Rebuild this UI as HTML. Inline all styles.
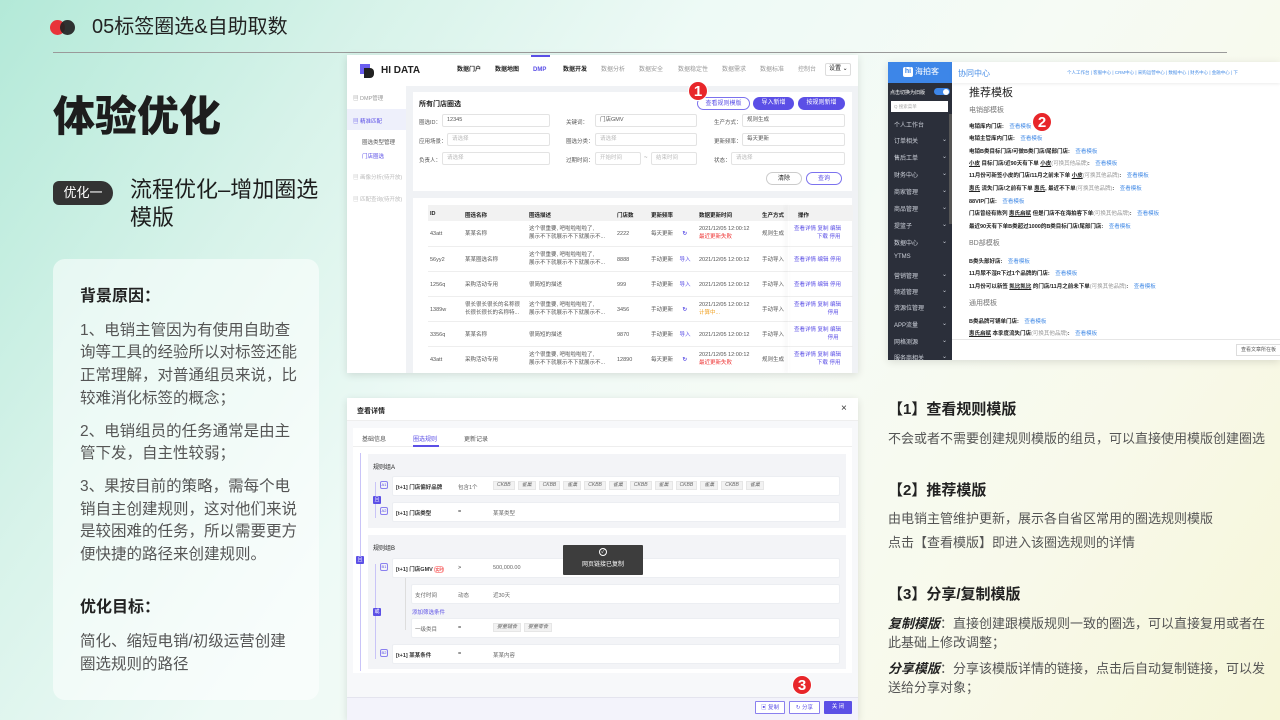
<!DOCTYPE html>
<html><head><meta charset="utf-8">
<style>
*{margin:0;padding:0;box-sizing:border-box}
body{width:1280px;height:720px;overflow:hidden;position:relative;font-family:"Liberation Sans","Noto Sans CJK SC",sans-serif;color:#222;
background:linear-gradient(125deg,#b3e9d8 0%,#d8f3ea 22%,#eefaf6 40%,#f6fbf5 60%,#f8f9ea 80%,#f6f6d8 100%)}
.a{position:absolute;white-space:nowrap}
.p{color:#5b4fe6}
.t6{font-size:6px}
.g{color:#999}
.ss{position:absolute;background:#fff;box-shadow:0 2px 8px rgba(0,0,0,.12);overflow:hidden}
.red{position:absolute;width:20px;height:20px;border-radius:50%;background:#e8262a;color:#fff;font-weight:bold;font-size:15px;text-align:center;line-height:20px;border:1px solid #fff}
.inp{position:absolute;height:13px;border:1px solid #e3e3e3;border-radius:2px;font-size:5.5px;line-height:11px;padding-left:4px;color:#bbb;background:#fff}
.btn{position:absolute;height:13px;border-radius:7px;font-size:6px;line-height:12px;text-align:center}
.row{position:absolute;left:81px;width:425px;border-bottom:1px solid #eee;font-size:5.5px;color:#555}
.row span{position:absolute;white-space:nowrap;line-height:8px}
.lm{position:absolute;left:6px;font-size:6px;color:#cfd3dc;white-space:nowrap}
.lm i{position:absolute;left:48px;font-style:normal}
.rt{position:absolute;left:81px;font-size:5.5px;font-weight:bold;color:#222;white-space:nowrap}
.rt b{color:#4a8fe7;font-weight:normal;margin-left:4px}
.rt em{font-style:normal;color:#999;font-weight:normal}
.rr{position:absolute;background:#fff;border:1px solid #eceef2;border-radius:2px;font-size:5.5px;color:#333}
.rr span{position:absolute;top:6px;white-space:nowrap}
.tag{display:inline-block;background:#f2f2f2;border:1px solid #e6e6e6;padding:0 3px;margin-right:3px;font-size:5px;color:#666;line-height:7px}
.ic{position:absolute;width:8px;height:8px;border:1px solid #8a80ef;border-radius:2px;font-size:4px;color:#5b4fe6;text-align:center;line-height:6px}
.lg{position:absolute;width:8px;height:8px;background:#5b4fe6;border-radius:1px;color:#fff;font-size:5px;text-align:center;line-height:8px}
</style></head><body>

<!-- header -->
<div class="a" style="left:50px;top:20px;width:15px;height:15px;border-radius:50%;background:#e8343a"></div>
<div class="a" style="left:60px;top:20px;width:15px;height:15px;border-radius:50%;background:#222;opacity:.92"></div>
<div class="a" style="left:92px;top:13px;font-size:20px;line-height:28px;color:#222">05标签圈选&amp;自助取数</div>
<div class="a" style="left:53px;top:52px;width:1174px;height:1px;background:#9a9a9a"></div>

<div class="a" style="left:53px;top:91px;font-size:42px;font-weight:900;line-height:52px;color:#1d1d1d">体验优化</div>
<div class="a" style="left:53px;top:181px;width:60px;height:24px;border-radius:6px 12px 12px 6px;background:#333;color:#fff;font-size:13px;line-height:24px;text-align:center">优化一</div>
<div class="a" style="left:130px;top:176px;font-size:22px;line-height:28px;color:#1d1d1d;white-space:normal;width:190px">流程优化–增加圈选模版</div>

<div class="a" style="left:53px;top:259px;width:266px;height:441px;border-radius:12px;background:rgba(255,255,255,.55);white-space:normal"></div>
<div class="a" style="left:80px;top:286px;width:221px;white-space:normal;font-size:15.5px;line-height:22.7px;color:#555">
<div style="color:#222;font-weight:bold;font-size:16px;margin-bottom:11px">背景原因：</div>
<div style="margin-bottom:10px">1、电销主管因为有使用自助查询等工具的经验所以对标签还能正常理解，对普通组员来说，比较难消化标签的概念；</div>
<div style="margin-bottom:10px">2、电销组员的任务通常是由主管下发，自主性较弱；</div>
<div style="margin-bottom:30px">3、果按目前的策略，需每个电销自主创建规则，这对他们来说是较困难的任务，所以需要更方便快捷的路径来创建规则。</div>
<div style="color:#222;font-weight:bold;font-size:16px;margin-bottom:12px">优化目标：</div>
<div>简化、缩短电销/初级运营创建圈选规则的路径</div>
</div>

<!-- screenshot 1 -->
<div class="ss" style="left:347px;top:55px;width:511px;height:318px;background:#f0f2f5">
 <div class="a" style="left:0;top:0;width:511px;height:31px;background:#fff"></div>
 <div class="a" style="left:184px;top:0;width:19px;height:2px;background:#5b4fe6"></div>
 <div class="a" style="left:13px;top:9px;width:10px;height:10px;background:#6b5ff0"></div>
 <div class="a" style="left:17px;top:13px;width:10px;height:10px;background:#222;border-radius:0 4px 4px 0"></div>
 <div class="a" style="left:34px;top:10px;font-size:10px;font-weight:900;line-height:11px">HI DATA</div>
 <div class="a" style="top:12px;left:110px;font-size:6px;font-weight:bold;line-height:7px">数据门户</div>
 <div class="a" style="top:12px;left:148px;font-size:6px;font-weight:bold;line-height:7px">数据地图</div>
 <div class="a p" style="top:12px;left:186px;font-size:6px;font-weight:bold;line-height:7px">DMP</div>
 <div class="a" style="top:12px;left:216px;font-size:6px;font-weight:bold;line-height:7px">数据开发</div>
 <div class="a g" style="top:12px;left:254px;font-size:6px;line-height:7px">数据分析</div>
 <div class="a g" style="top:12px;left:292px;font-size:6px;line-height:7px">数据安全</div>
 <div class="a g" style="top:12px;left:331px;font-size:6px;line-height:7px">数据稳定性</div>
 <div class="a g" style="top:12px;left:375px;font-size:6px;line-height:7px">数据需求</div>
 <div class="a g" style="top:12px;left:413px;font-size:6px;line-height:7px">数据标准</div>
 <div class="a g" style="top:12px;left:451px;font-size:6px;line-height:7px">控制台</div>
 <div class="a" style="top:8px;left:478px;width:26px;height:13px;border:1px solid #ddd;border-radius:2px;font-size:6px;line-height:11px;padding-left:3px">设置 ⌄</div>
 <div class="a" style="left:0;top:31px;width:59px;height:287px;background:#fff"></div>
 <div class="a g" style="left:6px;top:39px;font-size:5.5px">▤ DMP管理</div>
 <div class="a" style="left:0;top:54px;width:59px;height:21px;background:#eef0fb"></div>
 <div class="a p" style="left:6px;top:62px;font-size:5.5px">▤ 精准匹配</div>
 <div class="a" style="left:15px;top:83px;font-size:5.5px;color:#555">圈选类型管理</div>
 <div class="a p" style="left:15px;top:97px;font-size:5.5px">门店圈选</div>
 <div class="a" style="left:6px;top:118px;font-size:5.5px;color:#bbb">▤ 画像分析(待开放)</div>
 <div class="a" style="left:6px;top:140px;font-size:5.5px;color:#bbb">▤ 匹配查询(待开放)</div>
 <div class="a" style="left:66px;top:37px;width:439px;height:99px;background:#fff"></div>
 <div class="a" style="left:72px;top:44px;font-size:7px;font-weight:bold">所有门店圈选</div>
 <div class="btn p" style="left:350px;top:42px;width:53px;border:1px solid #7c72ee;background:#fff">查看规则模版</div>
 <div class="btn" style="left:406px;top:42px;width:41px;background:#5b4fe6;color:#fff">导入新增</div>
 <div class="btn" style="left:451px;top:42px;width:47px;background:#5b4fe6;color:#fff">按规则新增</div>
 <div class="a" style="left:72px;top:63px;font-size:5.5px;color:#555">圈选ID：</div><div class="inp" style="left:95px;top:59px;width:108px;color:#555">12345</div>
 <div class="a" style="left:219px;top:63px;font-size:5.5px;color:#555">关键词：</div><div class="inp" style="left:248px;top:59px;width:102px;color:#555">门店GMV</div>
 <div class="a" style="left:367px;top:63px;font-size:5.5px;color:#555">生产方式：</div><div class="inp" style="left:395px;top:59px;width:103px;color:#555">规则生成</div>
 <div class="a" style="left:72px;top:82px;font-size:5.5px;color:#555">应用场景：</div><div class="inp" style="left:100px;top:78px;width:103px">请选择</div>
 <div class="a" style="left:219px;top:82px;font-size:5.5px;color:#555">圈选分类：</div><div class="inp" style="left:248px;top:78px;width:102px">请选择</div>
 <div class="a" style="left:367px;top:82px;font-size:5.5px;color:#555">更新频率：</div><div class="inp" style="left:395px;top:78px;width:103px;color:#555">每天更新</div>
 <div class="a" style="left:72px;top:101px;font-size:5.5px;color:#555">负责人：</div><div class="inp" style="left:95px;top:97px;width:108px">请选择</div>
 <div class="a" style="left:219px;top:101px;font-size:5.5px;color:#555">过期时间：</div><div class="inp" style="left:248px;top:97px;width:46px">开始时间</div><div class="a g" style="left:297px;top:100px;font-size:6px">~</div><div class="inp" style="left:304px;top:97px;width:46px">结束时间</div>
 <div class="a" style="left:367px;top:101px;font-size:5.5px;color:#555">状态：</div><div class="inp" style="left:384px;top:97px;width:114px">请选择</div>
 <div class="btn" style="left:419px;top:117px;width:36px;border:1px solid #ccc;background:#fff">清除</div>
 <div class="btn p" style="left:459px;top:117px;width:36px;border:1px solid #7c72ee;background:#fff">查询</div>
 <div class="a" style="left:66px;top:143px;width:439px;height:175px;background:#fff"></div>
 <div class="a" style="left:81px;top:150px;width:425px;height:16px;background:#f2f2f2;font-size:5.5px;font-weight:bold"></div>
 <div class="a" style="top:156px;left:83px;font-size:5.5px;font-weight:bold">ID</div>
 <div class="a" style="top:156px;left:118px;font-size:5.5px;font-weight:bold">圈选名称</div>
 <div class="a" style="top:156px;left:182px;font-size:5.5px;font-weight:bold">圈选描述</div>
 <div class="a" style="top:156px;left:270px;font-size:5.5px;font-weight:bold">门店数</div>
 <div class="a" style="top:156px;left:304px;font-size:5.5px;font-weight:bold">更新频率</div>
 <div class="a" style="top:156px;left:352px;font-size:5.5px;font-weight:bold">数据更新时间</div>
 <div class="a" style="top:156px;left:415px;font-size:5.5px;font-weight:bold">生产方式</div>
 <div class="a" style="top:156px;left:451px;font-size:5.5px;font-weight:bold">操作</div>
 <div class="row" style="top:166px;height:26px"><span style="left:2px;top:9px">43att</span><span style="left:37px;top:9px">某某名称</span><span style="left:101px;top:4px">这个很重要, 吧啦啦啦啦了,<br>展示不下就展示不下就展示不...</span><span style="left:189px;top:9px">2222</span><span style="left:223px;top:9px">每天更新 <b class="p" style="margin-left:8px">↻</b></span><span style="left:271px;top:4px">2021/12/05 12:00:12<br><b style="color:#e33;font-weight:normal">最近更新失败</b></span><span style="left:334px;top:9px">规则生成</span><span class="p" style="left:366px;top:4px">查看详情 复制 编辑<br>&nbsp;&nbsp;&nbsp;&nbsp;&nbsp;&nbsp;&nbsp;&nbsp;&nbsp;&nbsp;&nbsp;&nbsp;&nbsp;&nbsp;&nbsp;下载 停用</span></div>
 <div class="row" style="top:192px;height:25px"><span style="left:2px;top:9px">56yy2</span><span style="left:37px;top:9px">某某圈选名称</span><span style="left:101px;top:4px">这个很重要, 吧啦啦啦啦了,<br>展示不下就展示不下就展示不...</span><span style="left:189px;top:9px">8888</span><span style="left:223px;top:9px">手动更新 <b class="p" style="margin-left:5px;font-weight:normal">导入</b></span><span style="left:271px;top:9px">2021/12/05 12:00:12</span><span style="left:334px;top:9px">手动导入</span><span class="p" style="left:366px;top:9px">查看详情 编辑 停用</span></div>
 <div class="row" style="top:217px;height:25px"><span style="left:2px;top:9px">1256q</span><span style="left:37px;top:9px">采购活动专用</span><span style="left:101px;top:9px">很简短的描述</span><span style="left:189px;top:9px">999</span><span style="left:223px;top:9px">手动更新 <b class="p" style="margin-left:5px;font-weight:normal">导入</b></span><span style="left:271px;top:9px">2021/12/05 12:00:12</span><span style="left:334px;top:9px">手动导入</span><span class="p" style="left:366px;top:9px">查看详情 编辑 停用</span></div>
 <div class="row" style="top:242px;height:25px"><span style="left:2px;top:9px">1389w</span><span style="left:37px;top:4px">很长很长很长的名称很<br>长很长很长的名称特...</span><span style="left:101px;top:4px">这个很重要, 吧啦啦啦啦了,<br>展示不下就展示不下就展示不...</span><span style="left:189px;top:9px">3456</span><span style="left:223px;top:9px">手动更新 <b class="p" style="margin-left:8px">↻</b></span><span style="left:271px;top:4px">2021/12/05 12:00:12<br><b style="color:#f0a020;font-weight:normal">计算中...</b></span><span style="left:334px;top:9px">手动导入</span><span class="p" style="left:366px;top:4px">查看详情 复制 编辑<br>&nbsp;&nbsp;&nbsp;&nbsp;&nbsp;&nbsp;&nbsp;&nbsp;&nbsp;&nbsp;&nbsp;&nbsp;&nbsp;&nbsp;&nbsp;&nbsp;&nbsp;&nbsp;&nbsp;&nbsp;&nbsp;&nbsp;停用</span></div>
 <div class="row" style="top:267px;height:25px"><span style="left:2px;top:9px">3356q</span><span style="left:37px;top:9px">某某名称</span><span style="left:101px;top:9px">很简短的描述</span><span style="left:189px;top:9px">9870</span><span style="left:223px;top:9px">手动更新 <b class="p" style="margin-left:5px;font-weight:normal">导入</b></span><span style="left:271px;top:9px">2021/12/05 12:00:12</span><span style="left:334px;top:9px">手动导入</span><span class="p" style="left:366px;top:4px">查看详情 复制 编辑<br>&nbsp;&nbsp;&nbsp;&nbsp;&nbsp;&nbsp;&nbsp;&nbsp;&nbsp;&nbsp;&nbsp;&nbsp;&nbsp;&nbsp;&nbsp;&nbsp;&nbsp;&nbsp;&nbsp;&nbsp;&nbsp;&nbsp;停用</span></div>
 <div class="row" style="top:292px;height:26px;border:none"><span style="left:2px;top:9px">43att</span><span style="left:37px;top:9px">采购活动专用</span><span style="left:101px;top:4px">这个很重要, 吧啦啦啦啦了,<br>展示不下就展示不下就展示不...</span><span style="left:189px;top:9px">12890</span><span style="left:223px;top:9px">每天更新 <b class="p" style="margin-left:8px">↻</b></span><span style="left:271px;top:4px">2021/12/05 12:00:12<br><b style="color:#e33;font-weight:normal">最近更新失败</b></span><span style="left:334px;top:9px">规则生成</span><span class="p" style="left:366px;top:4px">查看详情 复制 编辑<br>&nbsp;&nbsp;&nbsp;&nbsp;&nbsp;&nbsp;&nbsp;&nbsp;&nbsp;&nbsp;&nbsp;&nbsp;&nbsp;&nbsp;&nbsp;下载 停用</span></div>
 <div class="a" style="left:441px;top:150px;width:1px;height:168px;box-shadow:-2px 0 4px rgba(0,0,0,.12)"></div>
</div>
<div class="red" style="left:688px;top:81px">1</div>

<!-- screenshot 2 -->
<div class="ss" style="left:888px;top:62px;width:392px;height:298px">
 <div class="a" style="left:0;top:0;width:64px;height:21px;background:#3d86e8"></div>
 <div class="a" style="left:15px;top:5px;width:10px;height:10px;background:#fff;border-radius:2px;color:#3d86e8;font-size:7px;font-weight:bold;text-align:center;line-height:10px">hi</div>
 <div class="a" style="left:27px;top:5px;color:#fff;font-size:8px;line-height:10px">海拍客</div>
 <div class="a" style="left:0;top:21px;width:64px;height:277px;background:#2b2f3a"></div>
 <div class="a" style="left:2px;top:27px;font-size:5px;color:#fff">点击切换为旧版</div>
 <div class="a" style="left:46px;top:26px;width:16px;height:7px;border-radius:4px;background:#3d86e8"></div>
 <div class="a" style="left:55px;top:26.5px;width:6px;height:6px;border-radius:50%;background:#fff"></div>
 <div class="a" style="left:3px;top:39px;width:57px;height:11px;background:#fff;font-size:4.5px;color:#aaa;line-height:11px;padding-left:3px">Q 搜索菜单</div>
 <div class="a" style="left:61px;top:52px;width:3px;height:110px;background:#555"></div>
 <div class="lm" style="top:58px">个人工作台</div>
 <div class="lm" style="top:74px">订单相关<i>⌄</i></div>
 <div class="lm" style="top:91px">售后工单<i>⌄</i></div>
 <div class="lm" style="top:108px">财务中心<i>⌄</i></div>
 <div class="lm" style="top:125px">商家管理<i>⌄</i></div>
 <div class="lm" style="top:142px">商品管理<i>⌄</i></div>
 <div class="lm" style="top:159px">提篮子<i>⌄</i></div>
 <div class="lm" style="top:176px">数据中心<i>⌄</i></div>
 <div class="lm" style="top:192px">YTMS</div>
 <div class="lm" style="top:209px">营销管理<i>⌄</i></div>
 <div class="lm" style="top:225px">频道管理<i>⌄</i></div>
 <div class="lm" style="top:241px">资源位管理<i>⌄</i></div>
 <div class="lm" style="top:258px">APP流量<i>⌄</i></div>
 <div class="lm" style="top:275px">网格测源<i>⌄</i></div>
 <div class="lm" style="top:291px">服务商相关<i>⌄</i></div>
 <div class="a" style="left:64px;top:0;width:328px;height:21px;background:#fff;box-shadow:0 1px 3px rgba(0,0,0,.08)"></div>
 <div class="a" style="left:70px;top:6px;font-size:8px;color:#4a8fe7">协同中心</div>
 <div class="a" style="left:179px;top:8px;font-size:4.5px;color:#4a8fe7">个人工作台 | 客服中心 | CRM中心 | 采购运营中心 | 数据中心 | 财务中心 | 金融中心 | 下</div>
 <div class="a" style="left:81px;top:22px;font-size:11px;color:#222">推荐模板</div>
 <div class="a" style="left:81px;top:43px;font-size:7px;color:#777">电销部模板</div>
 <div class="rt" style="top:60px">电销库内门店: <b>查看模板</b></div>
 <div class="rt" style="top:72px">电销主管库内门店: <b>查看模板</b></div>
 <div class="rt" style="top:85px">电销B类目标门店/可做B类门店/尾部门店: <b>查看模板</b></div>
 <div class="rt" style="top:97px"><u>小皮</u> 目标门店/近90天有下单 <u>小皮</u><em>(可换其他品牌)</em>: <b>查看模板</b></div>
 <div class="rt" style="top:109px">11月份可新签小皮的门店/11月之前未下单 <u>小皮</u><em>(可换其他品牌)</em>: <b>查看模板</b></div>
 <div class="rt" style="top:122px"><u>惠氏</u> 流失门店/之前有下单 <u>惠氏</u>, 最近不下单<em>(可换其他品牌)</em>: <b>查看模板</b></div>
 <div class="rt" style="top:135px">88VIP门店: <b>查看模板</b></div>
 <div class="rt" style="top:147px">门店曾经有陈列 <u>惠氏启赋</u> 但是门店不在海拍客下单<em>(可换其他品牌)</em>: <b>查看模板</b></div>
 <div class="rt" style="top:160px">最近90天有下单B类超过1000的B类目标门店/尾部门店: <b>查看模板</b></div>
 <div class="a" style="left:81px;top:176px;font-size:7px;color:#777">BD部模板</div>
 <div class="rt" style="top:195px">B类头部好店: <b>查看模板</b></div>
 <div class="rt" style="top:207px">11月尿不湿R下过1个品牌的门店: <b>查看模板</b></div>
 <div class="rt" style="top:220px">11月份可以新签 <u>凯比凯比</u> 的门店/11月之前未下单<em>(可换其他品牌)</em>: <b>查看模板</b></div>
 <div class="a" style="left:81px;top:236px;font-size:7px;color:#777">通用模板</div>
 <div class="rt" style="top:255px">B类品牌可铺单门店: <b>查看模板</b></div>
 <div class="rt" style="top:267px"><u>惠氏启赋</u> 本季度流失门店<em>(可换其他品牌)</em>: <b>查看模板</b></div>
 <div class="a" style="left:64px;top:277px;width:328px;height:21px;background:#fff;border-top:1px solid #e6e6e6"></div>
 <div class="a" style="left:348px;top:282px;width:50px;height:12px;border:1px solid #ddd;font-size:5px;line-height:10px;padding-left:4px;color:#555">查看文章所在板</div>
</div>
<div class="red" style="left:1032px;top:112px">2</div>

<!-- screenshot 3 -->
<div class="ss" style="left:347px;top:398px;width:511px;height:322px;background:#f7f8fa">
 <div class="a" style="left:0;top:0;width:511px;height:23px;background:#fff;border-bottom:1px solid #eee"></div>
 <div class="a" style="left:10px;top:8px;font-size:7px;font-weight:bold">查看详情</div>
 <div class="a" style="left:494px;top:5px;font-size:10px;color:#333">×</div>
 <div class="a" style="left:6px;top:30px;width:499px;height:245px;background:#fff"></div>
 <div class="a" style="left:6px;top:48px;width:499px;height:1px;background:#eee"></div>
 <div class="a" style="left:15px;top:36px;font-size:6px;color:#555">基础信息</div>
 <div class="a p" style="left:66px;top:36px;font-size:6px">圈选规则</div>
 <div class="a" style="left:66px;top:47px;width:26px;height:2px;background:#5b4fe6"></div>
 <div class="a" style="left:117px;top:36px;font-size:6px;color:#555">更新记录</div>
 <div class="a" style="left:13px;top:55px;width:1px;height:218px;background:#c9c4f7"></div>
 <div class="lg" style="left:9px;top:158px">且</div>
 <div class="a" style="left:21px;top:56px;width:478px;height:74px;background:#f3f4f7"></div>
 <div class="a" style="left:26px;top:64px;font-size:6px">规则组A</div>
 <div class="a" style="left:28px;top:84px;width:1px;height:36px;background:#c9c4f7"></div>
 <div class="lg" style="left:26px;top:98px">且</div>
 <div class="ic" style="left:33px;top:83px">A1</div>
 <div class="rr" style="left:45px;top:78px;width:448px;height:20px"><span style="left:3px;font-weight:bold">[t+1] 门店偏好品牌</span><span style="left:65px;color:#666">包含1个</span><span style="left:100px;top:4px"><i class="tag">CKBB</i><i class="tag">雀巢</i><i class="tag">CKBB</i><i class="tag">雀巢</i><i class="tag">CKBB</i><i class="tag">雀巢</i><i class="tag">CKBB</i><i class="tag">雀巢</i><i class="tag">CKBB</i><i class="tag">雀巢</i><i class="tag">CKBB</i><i class="tag">雀巢</i></span></div>
 <div class="ic" style="left:33px;top:109px">A2</div>
 <div class="rr" style="left:45px;top:104px;width:448px;height:20px"><span style="left:3px;font-weight:bold">[t+1] 门店类型</span><span style="left:65px">=</span><span style="left:100px;color:#666">某某类型</span></div>
 <div class="a" style="left:21px;top:137px;width:478px;height:134px;background:#f3f4f7"></div>
 <div class="a" style="left:26px;top:145px;font-size:6px">规则组B</div>
 <div class="a" style="left:28px;top:166px;width:1px;height:95px;background:#c9c4f7"></div>
 <div class="lg" style="left:26px;top:210px">或</div>
 <div class="ic" style="left:33px;top:165px">B1</div>
 <div class="rr" style="left:45px;top:160px;width:448px;height:20px"><span style="left:3px;font-weight:bold">[t+1] 门店GMV <i style="color:#e55;font-size:4px;border:1px solid #f99;border-radius:3px;font-style:normal">实时</i></span><span style="left:65px">&gt;</span><span style="left:100px;color:#666">500,000.00</span></div>
 <div class="a" style="left:58px;top:180px;width:1px;height:52px;background:#ddd"></div>
 <div class="rr" style="left:64px;top:186px;width:429px;height:20px"><span style="left:3px;color:#666">支付时间</span><span style="left:46px;color:#666">动态</span><span style="left:81px;color:#666">近30天</span></div>
 <div class="a p" style="left:65px;top:210px;font-size:5.5px">添加筛选条件</div>
 <div class="rr" style="left:64px;top:220px;width:429px;height:20px"><span style="left:3px;color:#666">一级类目</span><span style="left:46px">=</span><span style="left:81px;top:4px"><i class="tag">婴童辅食</i><i class="tag">婴童零食</i></span></div>
 <div class="ic" style="left:33px;top:251px">B2</div>
 <div class="rr" style="left:45px;top:246px;width:448px;height:20px"><span style="left:3px;font-weight:bold">[t+1] 某某条件</span><span style="left:65px">=</span><span style="left:100px;color:#666">某某内容</span></div>
 <div class="a" style="left:216px;top:147px;width:80px;height:30px;background:#3d3d3d;border-radius:1px;color:#fff;font-size:6px;text-align:center"><div style="margin:3px auto 0;width:8px;height:8px;border:1px solid #fff;border-radius:50%;font-size:5px;line-height:6px">✓</div><div style="margin-top:3px">网页链接已复制</div></div>
 <div class="a" style="left:0;top:299px;width:511px;height:23px;background:#f3f3fb;border-top:1px solid #e4e4ee"></div>
 <div class="btn p" style="left:408px;top:303px;width:30px;border:1px solid #8a80ef;border-radius:1px;background:#fff;font-size:5.5px">▣ 复制</div>
 <div class="btn p" style="left:442px;top:303px;width:31px;border:1px solid #8a80ef;border-radius:1px;background:#fff;font-size:5.5px">↻ 分享</div>
 <div class="btn" style="left:477px;top:303px;width:28px;border-radius:1px;background:#5b4fe6;color:#fff;font-size:5.5px">关 闭</div>
</div>
<div class="red" style="left:792px;top:675px">3</div>

<!-- right text -->
<div class="a" style="left:888px;top:400px;font-size:15px;line-height:20px;font-weight:bold;color:#222">【1】查看规则模版</div>
<div class="a" style="left:888px;top:430px;font-size:13px;line-height:18px;color:#555">不会或者不需要创建规则模版的组员，可以直接使用模版创建圈选</div>
<div class="a" style="left:888px;top:481px;font-size:15px;line-height:20px;font-weight:bold;color:#222">【2】推荐模版</div>
<div class="a" style="left:888px;top:510px;font-size:13px;line-height:18px;color:#555">由电销主管维护更新，展示各自省区常用的圈选规则模版</div>
<div class="a" style="left:888px;top:534px;font-size:13px;line-height:18px;color:#555">点击【查看模版】即进入该圈选规则的详情</div>
<div class="a" style="left:888px;top:585px;font-size:15px;line-height:20px;font-weight:bold;color:#222">【3】分享/复制模版</div>
<div class="a" style="left:888px;top:614px;width:390px;white-space:normal;font-size:13px;line-height:19px;color:#555"><b style="color:#222;font-style:italic">复制模版</b>：直接创建跟模版规则一致的圈选，可以直接复用或者在此基础上修改调整；</div>
<div class="a" style="left:888px;top:659px;width:390px;white-space:normal;font-size:13px;line-height:19px;color:#555"><b style="color:#222;font-style:italic">分享模版</b>：分享该模版详情的链接，点击后自动复制链接，可以发送给分享对象；</div>
</body></html>
